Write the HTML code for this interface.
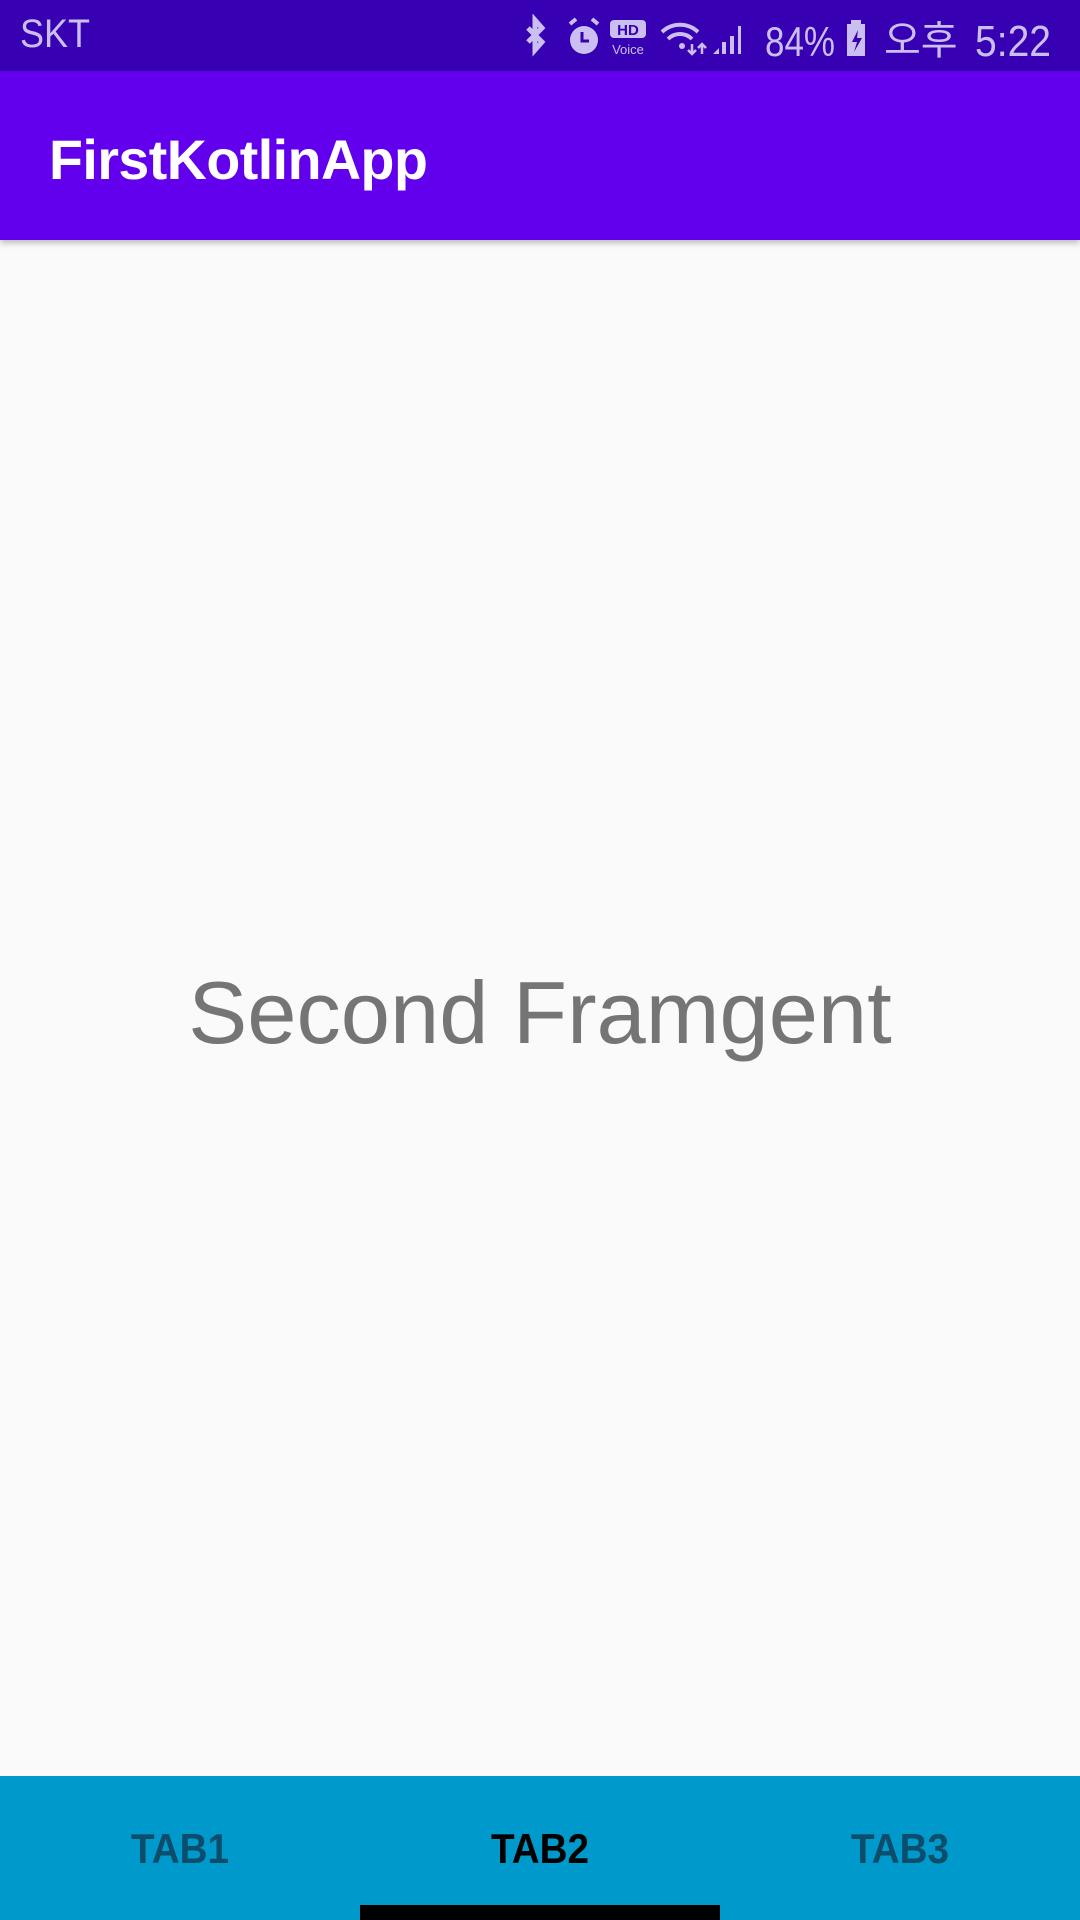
<!DOCTYPE html>
<html><head><meta charset="utf-8"><style>
body{margin:0;width:1080px;height:1920px;background:#fafafa;position:relative;overflow:hidden;font-family:"Liberation Sans","Noto Sans CJK KR",sans-serif}
.sb{position:absolute;left:0;top:0;width:1080px;height:71px;background:#3700b3;color:#cbbff2}
.ab{position:absolute;left:0;top:71px;width:1080px;height:169px;background:#6200ee;box-shadow:0 3px 6px rgba(0,0,0,.25)}
.t{position:absolute;white-space:nowrap}
.tabs{position:absolute;left:0;top:1776px;width:1080px;height:144px;background:#0099cc}
.tab{position:absolute;top:6px;width:360px;height:134px;line-height:134px;text-align:center;font-size:42px;font-weight:bold;color:#0b4d6b;transform:scaleX(.92)}
</style></head><body>
<div class="sb">
<div class="t" style="left:20px;top:12px;font-size:40px;transform:scaleX(.9);transform-origin:left">SKT</div>
<svg class="t" style="left:520px;top:14px" width="540" height="46" viewBox="0 0 540 46">
<g fill="none" stroke="#cbbff2" stroke-width="5"><path d="M8 14 L22 28 L15 36 L15 6 L22 14 L8 28"/></g>
<circle cx="64" cy="26" r="14" fill="#cbbff2"/><path d="M62 18v9h7" stroke="#3700b3" stroke-width="3" fill="none"/>
<path d="M50 10l6-5M78 10l-6-5" stroke="#cbbff2" stroke-width="4"/>
<rect x="90" y="6" width="36" height="18" rx="4" fill="#cbbff2"/>
<text x="108" y="21" font-size="15" font-weight="bold" fill="#3700b3" text-anchor="middle" font-family="Liberation Sans">HD</text>
<text x="108" y="40" font-size="13" fill="#cbbff2" text-anchor="middle" font-family="Liberation Sans">Voice</text>
<path d="M142 18a26 26 0 0 1 36 0M148 25a17 17 0 0 1 24 0" stroke="#cbbff2" stroke-width="4" fill="none"/>
<circle cx="162" cy="32" r="3" fill="#cbbff2"/>
<path d="M172 30v10M168 36l4 4 4-4M182 40v-10M178 34l4-4 4 4" stroke="#cbbff2" stroke-width="2.5" fill="none"/>
<path d="M193 40l6-6v6zM202 40v-12h4v12zM210 40v-18h4v18zM218 40v-28h3v28z" fill="#cbbff2"/>
<text x="245" y="42" font-size="42" fill="#cbbff2" font-family="Liberation Sans" textLength="70" lengthAdjust="spacingAndGlyphs">84%</text>
<rect x="327" y="10" width="18" height="32" fill="#cbbff2"/><rect x="331" y="6" width="10" height="5" fill="#cbbff2"/>
<path d="M338 16l-6 12h5l-3 10 8-14h-5z" fill="#3700b3"/>
<text x="364" y="40" font-size="40" fill="#cbbff2" font-family="Noto Sans CJK KR,sans-serif">오후</text>
<text x="455" y="42" font-size="44" fill="#cbbff2" font-family="Liberation Sans" textLength="76" lengthAdjust="spacingAndGlyphs">5:22</text>
</svg>
</div>
<div class="ab"><div class="t" style="left:49px;top:57px;font-size:55.5px;font-weight:bold;color:#fff;letter-spacing:-0.5px">FirstKotlinApp</div></div>
<div class="t" style="left:187px;top:962px;font-size:88.5px;color:#757575;width:706px;text-align:center">Second Framgent</div>
<div class="tabs">
<div class="tab" style="left:0">TAB1</div>
<div class="tab" style="left:360px;color:#000">TAB2</div>
<div class="tab" style="left:720px">TAB3</div>
<div style="position:absolute;left:360px;top:129px;width:360px;height:15px;background:#000"></div>
</div>
</body></html>
